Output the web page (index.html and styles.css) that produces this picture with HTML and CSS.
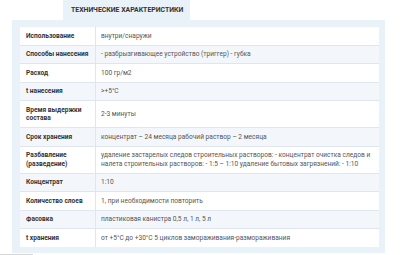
FILE: index.html
```html
<!DOCTYPE html>
<html lang="ru">
<head>
<meta charset="utf-8">
<link rel="stylesheet" href="styles.css">
</head>
<body>
<div class="wrap">
  <div class="tabs">
    <div class="tab">Технические характеристики</div>
  </div>
  <div class="panel">
    <table class="specs">
      <tr><th>Использование</th><td>внутри/снаружи</td></tr>
      <tr><th>Способы нанесения</th><td>- разбрызгивающее устройство (триггер) - губка</td></tr>
      <tr><th>Расход</th><td>100 гр/м2</td></tr>
      <tr><th>t нанесения</th><td>&gt;+5°C</td></tr>
      <tr><th>Время выдержки состава</th><td>2-3 минуты</td></tr>
      <tr><th>Срок хранения</th><td>концентрат – 24 месяца рабочий раствор – 2 месяца</td></tr>
      <tr><th>Разбавление (разведение)</th><td>удаление застарелых следов строительных растворов: - концентрат очистка следов и налета строительных растворов: - 1:5 – 1:10 удаление бытовых загрязнений: - 1:10</td></tr>
      <tr><th>Концентрат</th><td>1:10</td></tr>
      <tr><th>Количество слоев</th><td>1, при необходимости повторить</td></tr>
      <tr><th>Фасовка</th><td>пластиковая канистра 0,5 л, 1 л, 5 л</td></tr>
      <tr><th>t хранения</th><td>от +5°C до +30°C 5 циклов замораживания-размораживания</td></tr>
    </table>
  </div>
  <div class="rule"></div>
</div>
</body>
</html>
```
FILE: styles.css
```css
html, body {
  margin: 0;
  padding: 0;
  background: #ffffff;
}
body {
  font-family: Roboto, "Liberation Sans", sans-serif;
  color: #444;
}
.wrap {
  width: 373px;
  padding-left: 12px;
}
.tabs {
  display: flex;
  padding-left: 51px;
}
.tab {
  background: #e9f1f9;
  height: 20px;
  padding: 0 7px 0 8px;
  display: flex;
  align-items: center;
  font-size: 6.9px;
  font-weight: 700;
  text-transform: uppercase;
  color: #333;
}
.panel {
  background: #e9f1f9;
  padding: 7px 6px 6px 8px;
}
.specs {
  width: 100%;
  border-collapse: collapse;
  background: #fff;
  font-size: 6.6px;
  line-height: 8.3px;
}
.specs tr + tr th,
.specs tr + tr td {
  border-top: 1px solid #dfe6ee;
}
.specs tr:nth-child(even) {
  background: #f3f7fb;
}
.specs th {
  width: 63px;
  text-align: left;
  font-weight: 700;
  color: #333;
  padding: 4.65px 6px;
  vertical-align: middle;
  border-right: 1px solid #dfe6ee;
}
.specs td {
  color: #555;
  padding: 4.65px 6px 4.65px 5px;
  vertical-align: middle;
}
.rule {
  margin-top: 1px;
  margin-left: -12px;
  width: 33px;
  height: 1px;
  background: #d6d6d6;
}
```
